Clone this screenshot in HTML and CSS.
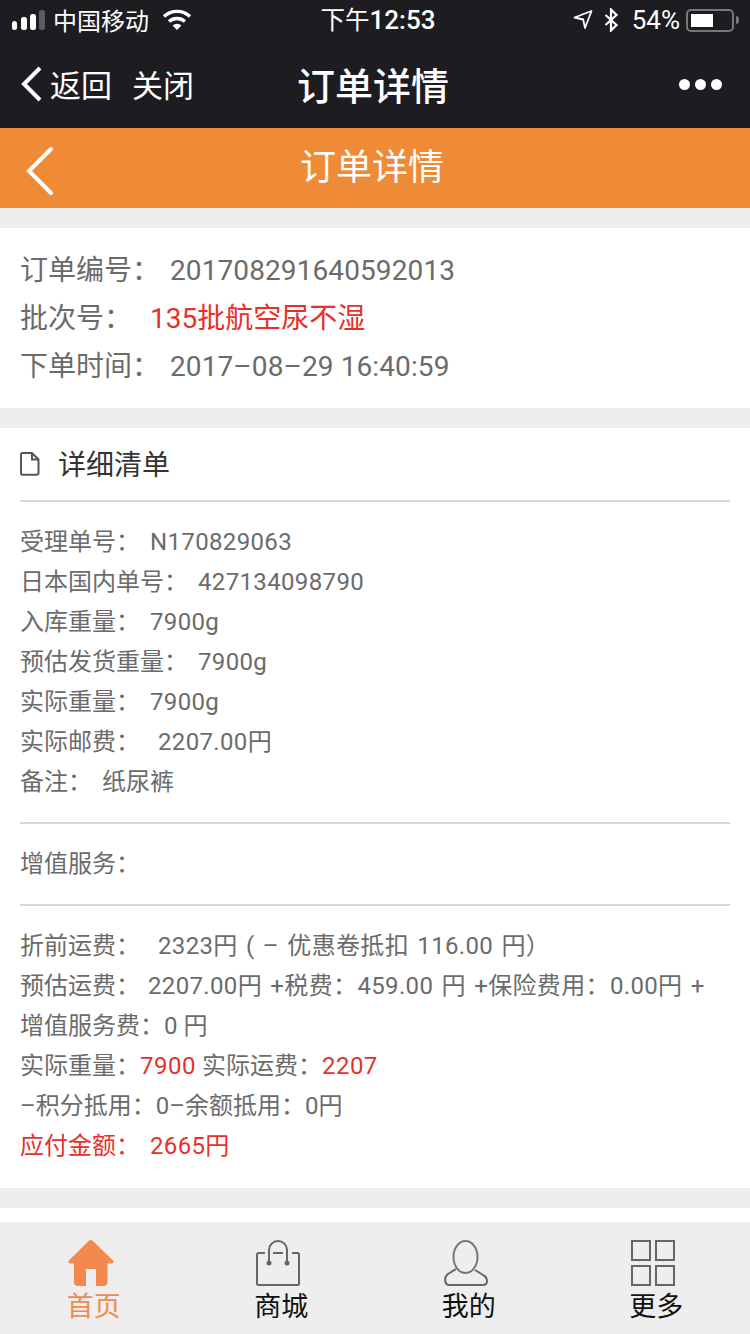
FILE: index.html
```html
<!DOCTYPE html>
<html lang="zh-CN">
<head>
    <meta charset="UTF-8">
    <meta name="viewport" content="width=device-width, initial-scale=1.0">
    <title>订单详情</title>
    <link rel="stylesheet" href="styles.css">
</head>
<body>
    <div class="status-bar">
        <div class="status-left">
            <svg class="signal" width="34" height="22" viewBox="0 0 34 22"><rect x="0" y="12" width="5" height="9" rx="2.5" fill="#fff"/><rect x="9" y="8" width="6" height="13" rx="2.5" fill="#fff"/><rect x="18" y="5" width="6" height="16" rx="2.5" fill="#fff"/><rect x="27" y="1" width="6" height="20" rx="2.5" fill="#5c5c60"/></svg>
            <span class="carrier">中国移动</span>
            <svg class="wifi" width="28" height="22" viewBox="0 0 28 22"><path d="M1 7.500a19 19 0 0 1 26 0" fill="none" stroke="#fff" stroke-width="3.400"/><path d="M6 12.500a12 12 0 0 1 16 0" fill="none" stroke="#fff" stroke-width="3.400"/><path d="M9.600 16.400a6.400 6.400 0 0 1 8.800 0L14 21z" fill="#fff"/></svg>
        </div>
        <div class="status-time"><span class="time-cn">下午</span>12:53</div>
        <div class="status-right">
            <svg width="20" height="20" viewBox="0 0 20 20"><path d="M1.500 7.500L18.500 1 12 18l-1.800-8.500z" fill="none" stroke="#fff" stroke-width="1.800" stroke-linejoin="round"/></svg>
            <svg class="bt" width="15" height="24" viewBox="0 0 15 24"><path d="M1.500 7l11 10-5.500 5.500v-21L12.500 7l-11 10" fill="none" stroke="#fff" stroke-width="2.200"/></svg>
            <span class="battery-text">54%</span>
            <div class="battery"><div class="battery-level"></div></div>
            <div class="battery-tip"></div>
        </div>
    </div>

    <div class="nav-bar">
        <div class="nav-left">
            <svg width="24" height="38" viewBox="0 0 24 38"><path d="M20 3L4 19l16 16" fill="none" stroke="#fff" stroke-width="4"/></svg>
            <span class="nav-back">返回</span>
            <span class="nav-close">关闭</span>
        </div>
        <div class="nav-title">订单详情</div>
        <div class="nav-more"><i></i><i></i><i></i></div>
    </div>

    <div class="page-header">
        <svg class="header-back" width="30" height="50" viewBox="0 0 30 50"><path d="M26 3L4 25l22 22" fill="none" stroke="#fff" stroke-width="4" stroke-linecap="round"/></svg>
        <h1>订单详情</h1>
    </div>

    <div class="content">
        <div class="card order-info">
            <p><span class="info-label">订单编号：</span>201708291640592013</p>
            <p><span class="info-label short">批次号：</span><span class="red">135批航空尿不湿</span></p>
            <p><span class="info-label">下单时间：</span>2017–08–29 16:40:59</p>
        </div>

        <div class="card detail">
            <div class="detail-head">
                <svg width="20" height="24" viewBox="0 0 20 24"><path d="M2.500 1h9.500l6.500 6.500v13.200a2 2 0 0 1-2 2h-14a1.500 1.500 0 0 1-1.500-1.500V2.500A1.500 1.500 0 0 1 2.500 1zM12 1v6.500h6.500" fill="none" stroke="#555" stroke-width="2"/></svg>
                <span class="detail-title">详细清单</span>
            </div>
            <div class="detail-section">
                <p>受理单号：<span class="val">N170829063</span></p>
                <p>日本国内单号：<span class="val">427134098790</span></p>
                <p>入库重量：<span class="val">7900g</span></p>
                <p>预估发货重量：<span class="val">7900g</span></p>
                <p>实际重量：<span class="val">7900g</span></p>
                <p>实际邮费：<span class="val wide">2207.00円</span></p>
                <p>备注：<span class="val note">纸尿裤</span></p>
            </div>
            <div class="detail-section">
                <p>增值服务：</p>
            </div>
            <div class="detail-section last">
                <p>折前运费：<span class="val wide">2323円 ( – 优惠卷抵扣 116.00 円）</span></p>
                <p>预估运费：<span class="val tight">2207.00円 +税费：459.00 円 +保险费用：0.00円 +</span></p>
                <p>增值服务费：0 円</p>
                <p>实际重量：<span class="num red">7900</span> 实际运费：<span class="num red">2207</span></p>
                <p>–积分抵用：0–余额抵用：0円</p>
                <p class="red">应付金额：<span class="val">2665円</span></p>
            </div>
        </div>
        <div class="card spacer"></div>
    </div>

    <div class="tab-bar">
        <div class="tab active">
            <svg width="46" height="46" viewBox="0 0 46 46"><path d="M22.700 0a3 3 0 0 1 2 .8L45 20.500c1.200 1.200.4 2.900-1 2.900h-4.500V42a4 4 0 0 1-4 4H28V29H18v17h-8a4 4 0 0 1-4-4V23.400H2c-1.400 0-2.200-1.700-1-2.900L20.700.8a3 3 0 0 1 2-.8z" fill="#f28a50"/></svg>
            <span>首页</span>
        </div>
        <div class="tab">
            <svg width="46" height="46" viewBox="0 0 46 46"><path d="M9 13H2.500A1.500 1.500 0 0 0 1 14.500v29A1.500 1.500 0 0 0 2.500 45h39a1.500 1.500 0 0 0 1.500-1.500v-29a1.500 1.500 0 0 0-1.500-1.500H36M17 13h10M13 23V10a9 9 0 0 1 18 0v13" fill="none" stroke="#666" stroke-width="2"/><circle cx="13" cy="23" r="2.500" fill="#666"/><circle cx="31" cy="23" r="2.500" fill="#666"/></svg>
            <span>商城</span>
        </div>
        <div class="tab">
            <svg width="46" height="46" viewBox="0 0 46 46"><ellipse cx="21.500" cy="17" rx="12" ry="16" fill="none" stroke="#777" stroke-width="2"/><path d="M12 29L4 34c-3 2-3 6-2.500 8S3 45 5 45h34c3 0 4-2 4-4 0-3-2-5-4-6l-8-5" fill="none" stroke="#666" stroke-width="2"/></svg>
            <span>我的</span>
        </div>
        <div class="tab">
            <svg width="46" height="46" viewBox="0 0 46 46"><g fill="none" stroke="#666" stroke-width="2"><rect x="1" y="1" width="18" height="19"/><rect x="25" y="1" width="18" height="19"/><rect x="1" y="26" width="18" height="19"/><rect x="25" y="26" width="18" height="19"/></g></svg>
            <span>更多</span>
        </div>
    </div>
</body>
</html>
```

FILE: styles.css
```css
* {
    box-sizing: border-box;
}
html, body {
    margin: 0;
    padding: 0;
}
body {
    width: 750px;
    height: 1334px;
    display: flex;
    flex-direction: column;
    overflow: hidden;
    background-color: #eee;
    font-family: Roboto, "Noto Sans CJK SC", sans-serif;
}
p {
    margin: 0;
}
.red {
    color: #e8302a;
}

/* status bar */
.status-bar {
    height: 40px;
    flex: none;
    position: relative;
    display: flex;
    align-items: center;
    justify-content: space-between;
    padding: 0 11px 0 12px;
    background-color: #1c1c21;
    color: #fff;
    font-size: 26px;
}
.status-left, .status-right {
    display: flex;
    align-items: center;
}
.carrier {
    margin: 0 0 2px 7px;
    font-size: 24px;
}
.wifi {
    margin-left: 14px;
}
.status-time {
    position: absolute;
    left: 6px;
    right: 0;
    top: 1px;
    text-align: center;
    font-size: 26px;
    font-weight: 500;
}
.time-cn {
    font-size: 24.5px;
    font-weight: 400;
}
.bt {
    margin-left: 11px;
}
.battery-text {
    margin: 0 0 1px 13px;
    white-space: nowrap;
}
.battery {
    width: 48px;
    height: 23px;
    margin-left: 6px;
    padding: 3px;
    border: 2px solid #77777a;
    border-radius: 5px;
}
.battery-level {
    width: 22px;
    height: 100%;
    background-color: #fff;
}
.battery-tip {
    width: 3px;
    height: 8px;
    margin-left: 2px;
    border-radius: 0 3px 3px 0;
    background-color: #77777a;
}

/* wechat nav */
.nav-bar {
    height: 88px;
    flex: none;
    position: relative;
    display: flex;
    align-items: center;
    justify-content: space-between;
    padding: 0 28px 0 20px;
    background-color: #1c1c21;
    color: #fff;
}
.nav-left {
    display: flex;
    align-items: center;
    font-size: 31px;
}
.nav-back, .nav-close {
    margin-bottom: 2px;
}
.nav-back {
    margin-left: 6px;
}
.nav-close {
    margin-left: 20px;
}
.nav-title {
    position: absolute;
    left: 0;
    right: 4px;
    padding-bottom: 2px;
    text-align: center;
    font-size: 38px;
    font-weight: 500;
}
.nav-more {
    display: flex;
    gap: 5px;
}
.nav-more i {
    width: 11px;
    height: 11px;
    border-radius: 50%;
    background-color: #fff;
}

/* orange header */
.page-header {
    height: 80px;
    flex: none;
    position: relative;
    display: flex;
    align-items: center;
    justify-content: center;
    padding: 0 6px 8px 0;
    background-color: #ef8a36;
    color: #fff;
}
.page-header h1 {
    margin: 0;
    font-size: 36px;
    font-weight: normal;
}
.header-back {
    position: absolute;
    left: 25px;
    top: 18px;
}

.content {
    flex: 1;
    overflow: hidden;
}
.card {
    margin-top: 20px;
    padding: 0 20px;
    background-color: #fff;
}
.order-info {
    height: 180px;
    padding-top: 19px;
    font-size: 28px;
    line-height: 48px;
    letter-spacing: 0.1px;
    color: #6b6b6b;
}
.order-info .red {
    letter-spacing: 0;
}
.info-label {
    display: inline-block;
    width: 150px;
    letter-spacing: 0;
}
.info-label.short {
    width: 130px;
}

.detail {
    height: 760px;
}
.detail-head {
    height: 74px;
    display: flex;
    align-items: center;
    gap: 18px;
    border-bottom: 2px solid #d8d8d8;
    font-size: 28px;
    color: #333;
}
.detail-title {
    margin-bottom: 2px;
}
.detail-section {
    padding: 20px 0;
    border-bottom: 2px solid #d8d8d8;
    font-size: 24px;
    line-height: 40px;
    color: #6b6b6b;
}
.detail-section.last {
    border-bottom: none;
}
.val {
    margin-left: 10px;
    letter-spacing: 0.35px;
    word-spacing: 2px;
}
.val.wide {
    margin-left: 18px;
}
.val.tight {
    margin-left: 8px;
}
.val.note {
    letter-spacing: 0;
}
.num {
    letter-spacing: 0.5px;
}
.spacer {
    height: 14px;
}

/* bottom tabs */
.tab-bar {
    height: 112px;
    flex: none;
    display: flex;
    padding-top: 18px;
    background-color: #eee;
}
.tab {
    flex: 1;
    display: flex;
    flex-direction: column;
    align-items: center;
    font-size: 27px;
    line-height: 36px;
    color: #111;
}
.tab svg {
    display: block;
    margin-right: 4px;
    margin-bottom: 3px;
}
.tab.active {
    color: #f28a50;
}
.tab.active svg {
    margin-right: 6px;
}
```
